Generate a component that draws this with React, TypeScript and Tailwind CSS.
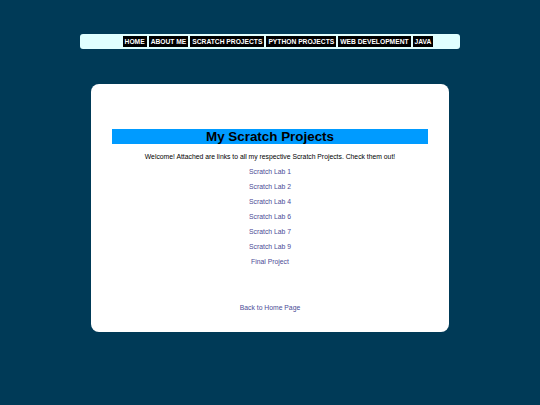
import React from "react";

const navItems = ["Home", "About Me", "Scratch Projects", "Python Projects", "Web Development", "Java"];
const links = ["Scratch Lab 1", "Scratch Lab 2", "Scratch Lab 4", "Scratch Lab 6", "Scratch Lab 7", "Scratch Lab 9", "Final Project"];

export default function App() {
  return (
    <div
      className="min-h-[405px] w-full bg-[#003a57] pt-[34px] flex flex-col items-center"
      style={{ fontFamily: '"Liberation Sans", Arial, sans-serif' }}
    >
      {/* Nav bar */}
      <nav className="w-[380px] h-[15px] bg-[#e0ffff] rounded-[3px] flex items-center justify-center gap-[2px] pl-[16px]">
        {navItems.map((item) => (
          <a
            key={item}
            href="#"
            className="block bg-black text-white font-bold uppercase text-[6.7px] leading-[11px] h-[11px] px-[2px]"
          >
            {item}
          </a>
        ))}
      </nav>

      {/* Main card */}
      <main className="mt-[35px] w-[358px] h-[248px] bg-white rounded-[8px] px-[21px] pt-[45px] flex flex-col items-center">
        <h1 className="w-full h-[15px] bg-[#009bff] text-black font-bold text-[13.4px] leading-[15px] text-center">
          My Scratch Projects
        </h1>
        <p className="mt-[8px] text-[6.8px] leading-[10px] text-black text-center">
          Welcome! Attached are links to all my respective Scratch Projects. Check them out!
        </p>
        <ul className="mt-[5px] flex flex-col items-center gap-[5px]">
          {links.map((l) => (
            <li key={l} className="text-[6.8px] leading-[10px]">
              <a href="#" className="block text-[#4b4b96]">
                {l}
              </a>
            </li>
          ))}
        </ul>
        <a href="#" className="block mt-[36px] text-[6.8px] leading-[10px] text-[#4b4b96]">
          Back to Home Page
        </a>
      </main>
    </div>
  );
}
